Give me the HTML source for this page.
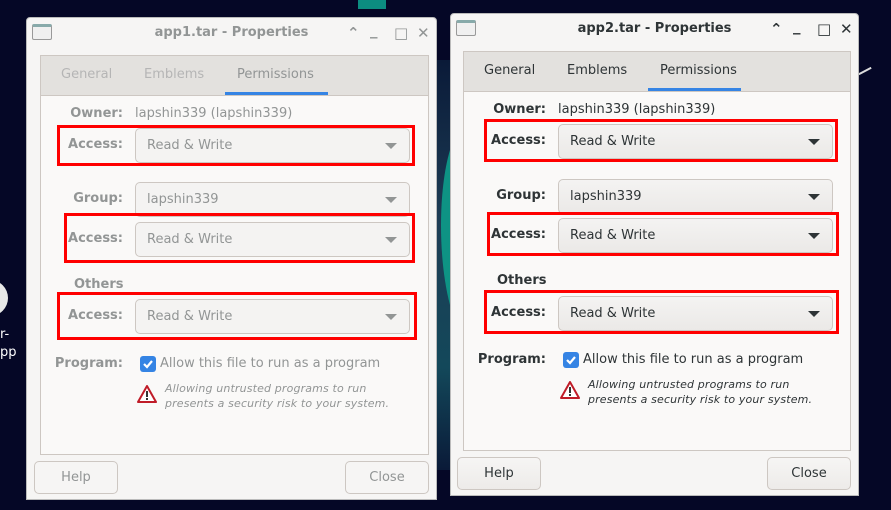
<!DOCTYPE html><html><head><style>
*{margin:0;padding:0;box-sizing:border-box}
body{width:891px;height:510px;overflow:hidden;background:#050726;font-family:"DejaVu Sans","Liberation Sans",sans-serif;font-size:13px;position:relative}
.a{position:absolute}
.win{position:absolute;width:409px;height:483px;background:#f6f5f4;border:1px solid #bbb;border-radius:4px 4px 0 0;color:#2e3436}
.title{left:0;top:0;width:100%;height:32px;text-align:center;line-height:30px;font-weight:bold;font-size:13px}
.nb{left:12px;top:37px;width:388px;height:400px;border:1px solid #cdc7c2;background:#faf9f8}
.tabs{left:0;top:0;width:100%;height:40px;background:#e3e1de;border-bottom:1px solid #cdc7c2}
.tab{top:11px}
.ul{top:36px;left:184px;width:93px;height:3px;background:#3584e4}
.lbl{font-weight:bold;text-align:right;width:82px}
.combo{left:94px;width:275px;height:35px;border:1px solid #cdc7c2;border-radius:5px;background:linear-gradient(#f4f3f2,#ebe9e7);padding-left:11px;line-height:33px}
.combo:after{content:"";position:absolute;right:12px;top:14px;border-left:6px solid transparent;border-right:6px solid transparent;border-top:6px solid #2e3436}
.red{border:3px solid #f00}
.btn{width:84px;height:33px;border:1px solid #cdc7c2;border-radius:5px;background:linear-gradient(#f6f5f4,#edebe9);text-align:center;line-height:31px;top:443px}
.dim{color:#929595}
.dim .combo{color:#929595;background:#f4f3f2}
.dim .combo:after{border-top-color:#929595}
.dim .btn{background:#f6f5f4}
.ic{font-size:15px;font-weight:bold}
.warn{font-style:italic;font-size:11px;line-height:15px;letter-spacing:0.15px}
.cb{width:16px;height:16px;background:#3584e4;border-radius:3px}
</style></head><body>
<div class="a" style="left:358px;top:0;width:28px;height:9px;background:#0c8c80"></div>
<div class="a" style="left:436px;top:60px;width:16px;height:410px;background:linear-gradient(#0a1a38,#1d3d55 40%,#13485a 75%,#0a1a38)"></div>
<svg class="a" style="left:430px;top:0" width="30" height="510"><path d="M20 150 C8 190 8 260 20 305 L22 305 L22 150Z" fill="#0e9384"/></svg>
<div class="a" style="left:-28px;top:280px;width:36px;height:36px;border-radius:50%;background:#e8e8e8"></div>
<div class="a" style="left:0;top:326px;color:#fff;font-size:13px;line-height:18px">r-<br>pp</div>
<div class="a" style="left:858px;top:70px;width:14px;height:2px;background:#ddd;transform:rotate(-28deg)"></div>

<!-- window 1 -->
<div class="win dim" style="left:26px;top:17px;width:411px">
<div class="a" style="left:5px;top:6px;width:20px;height:16px;border:1px solid #999;border-top:3px solid #8aa;background:#f0f0f0;border-radius:2px"></div>
<div class="a title">app1.tar - Properties</div>
<div class="a ic" style="left:320px;top:6px">⌃</div><div class="a ic" style="left:343px;top:3px">_</div><div class="a ic" style="left:367px;top:6px">□</div><div class="a ic" style="left:390px;top:6px">✕</div>
<div class="a nb" style="left:13px;width:389px">
<div class="a tabs"><div class="a tab" style="left:20px;color:#b5b5b5">General</div><div class="a tab" style="left:103px;color:#b5b5b5">Emblems</div><div class="a tab" style="left:196px">Permissions</div><div class="a ul" style="left:184px;width:103px"></div></div>
<div class="a lbl" style="left:0;top:50px">Owner:</div><div class="a" style="left:94px;top:50px">lapshin339 (lapshin339)</div>
<div class="a combo" style="top:72px">Read &amp; Write</div><div class="a lbl" style="left:0;top:81px">Access:</div>
<div class="a combo" style="top:126px">lapshin339</div><div class="a lbl" style="left:0;top:135px">Group:</div>
<div class="a combo" style="top:166px">Read &amp; Write</div><div class="a lbl" style="left:0;top:175px">Access:</div>
<div class="a" style="left:33px;top:221px;font-weight:bold">Others</div>
<div class="a combo" style="top:243px">Read &amp; Write</div><div class="a lbl" style="left:0;top:252px">Access:</div>
<div class="a lbl" style="left:0;top:300px">Program:</div>
<div class="a cb" style="left:99px;top:300px"><svg width="16" height="16"><path d="M4 8l3 3 5-6" stroke="#fff" stroke-width="2.2" fill="none"/></svg></div>
<div class="a" style="left:119px;top:300px">Allow this file to run as a program</div>
<svg class="a" style="left:96px;top:328px" width="20" height="20"><path d="M10 2L19 18H1Z" fill="#fff" stroke="#c01c28" stroke-width="2" stroke-linejoin="round"/><rect x="9" y="7" width="2" height="6" fill="#333"/><rect x="9" y="14" width="2" height="2" fill="#333"/></svg>
<div class="a warn" style="left:124px;top:325px">Allowing untrusted programs to run<br>presents a security risk to your system.</div>
</div>
<div class="a red" style="left:30px;top:107px;width:358px;height:41px"></div>
<div class="a red" style="left:37px;top:195px;width:351px;height:50px"></div>
<div class="a red" style="left:30px;top:274px;width:360px;height:48px"></div>
<div class="a btn" style="left:7px;top:443px">Help</div>
<div class="a btn" style="left:318px;top:443px">Close</div>
</div>

<!-- window 2 -->
<div class="win" style="left:450px;top:13px">
<div class="a" style="left:5px;top:6px;width:20px;height:16px;border:1px solid #999;border-top:3px solid #8aa;background:#f0f0f0;border-radius:2px"></div>
<div class="a title">app2.tar - Properties</div>
<div class="a ic" style="left:319px;top:6px">⌃</div><div class="a ic" style="left:342px;top:3px">_</div><div class="a ic" style="left:366px;top:6px">□</div><div class="a ic" style="left:389px;top:6px">✕</div>
<div class="a nb">
<div class="a tabs"><div class="a tab" style="left:20px">General</div><div class="a tab" style="left:103px">Emblems</div><div class="a tab" style="left:196px">Permissions</div><div class="a ul"></div></div>
<div class="a lbl" style="left:0;top:50px">Owner:</div><div class="a" style="left:94px;top:50px">lapshin339 (lapshin339)</div>
<div class="a combo" style="top:72px">Read &amp; Write</div><div class="a lbl" style="left:0;top:81px">Access:</div>
<div class="a combo" style="top:127px">lapshin339</div><div class="a lbl" style="left:0;top:136px">Group:</div>
<div class="a combo" style="top:166px">Read &amp; Write</div><div class="a lbl" style="left:0;top:175px">Access:</div>
<div class="a" style="left:33px;top:221px;font-weight:bold">Others</div>
<div class="a combo" style="top:244px">Read &amp; Write</div><div class="a lbl" style="left:0;top:253px">Access:</div>
<div class="a lbl" style="left:0;top:300px">Program:</div>
<div class="a cb" style="left:99px;top:300px"><svg width="16" height="16"><path d="M4 8l3 3 5-6" stroke="#fff" stroke-width="2.2" fill="none"/></svg></div>
<div class="a" style="left:119px;top:300px">Allow this file to run as a program</div>
<svg class="a" style="left:96px;top:328px" width="20" height="20"><path d="M10 2L19 18H1Z" fill="#fff" stroke="#c01c28" stroke-width="2" stroke-linejoin="round"/><rect x="9" y="7" width="2" height="6" fill="#333"/><rect x="9" y="14" width="2" height="2" fill="#333"/></svg>
<div class="a warn" style="left:124px;top:325px">Allowing untrusted programs to run<br>presents a security risk to your system.</div>
</div>
<div class="a red" style="left:33px;top:105px;width:354px;height:43px"></div>
<div class="a red" style="left:36px;top:198px;width:352px;height:44px"></div>
<div class="a red" style="left:33px;top:276px;width:355px;height:44px"></div>
<div class="a btn" style="left:6px;top:443px">Help</div>
<div class="a btn" style="left:316px;top:443px">Close</div>
</div>
</body></html>
